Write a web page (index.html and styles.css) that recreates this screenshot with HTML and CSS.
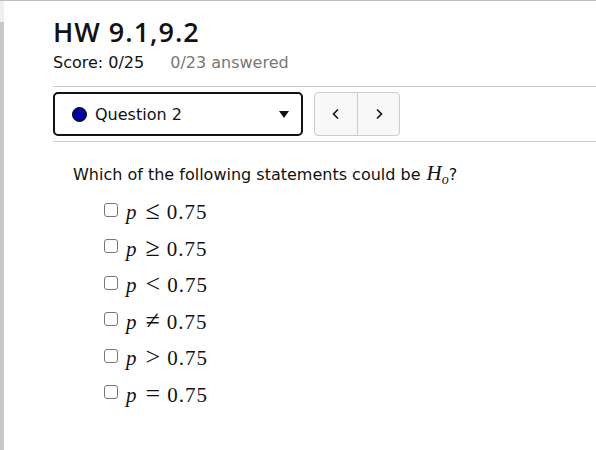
FILE: index.html
```html
<!DOCTYPE html>
<html>
<head>
<meta charset="utf-8">
<link rel="stylesheet" href="styles.css">
</head>
<body>
<div class="page">
  <div class="strip"><div class="strip-top"></div><div class="strip-bottom"></div></div>
  <main class="main">
    <h1 class="title">HW 9.1,9.2</h1>
    <div class="scoreline"><span class="score">Score: 0/25</span><span class="answered">0/23 answered</span></div>
    <div class="navbar">
      <div class="select">
        <span class="dot"></span>
        <span class="qlabel">Question 2</span>
        <span class="caret"></span>
      </div>
      <div class="navbtns">
        <button class="navbtn"><svg width="10" height="12" viewBox="0 0 10 12"><path d="M7 1.5 L2.5 6 L7 10.5" fill="none" stroke="#111" stroke-width="1.6"/></svg></button>
        <button class="navbtn"><svg width="10" height="12" viewBox="0 0 10 12"><path d="M3 1.5 L7.5 6 L3 10.5" fill="none" stroke="#111" stroke-width="1.6"/></svg></button>
      </div>
    </div>
    <div class="question">
      <p class="qtext">Which of the following statements could be <span class="hvar">H<sub class="sub">o</sub></span>?</p>
      <ul class="options">
        <li class="opt"><span class="cb"></span><span class="math"><span class="mi">p</span><span class="rel">≤</span>0.75</span></li>
        <li class="opt"><span class="cb"></span><span class="math"><span class="mi">p</span><span class="rel">≥</span>0.75</span></li>
        <li class="opt"><span class="cb"></span><span class="math"><span class="mi">p</span><span class="rel">&lt;</span>0.75</span></li>
        <li class="opt"><span class="cb"></span><span class="math"><span class="mi">p</span><span class="rel">≠</span>0.75</span></li>
        <li class="opt"><span class="cb"></span><span class="math"><span class="mi">p</span><span class="rel">&gt;</span>0.75</span></li>
        <li class="opt"><span class="cb"></span><span class="math"><span class="mi">p</span><span class="rel">=</span>0.75</span></li>
      </ul>
    </div>
  </main>
</div>
</body>
</html>
```
FILE: styles.css
```css
* { box-sizing: border-box; }
html, body { margin: 0; padding: 0; background: #fff; }
body { font-family: "DejaVu Sans", sans-serif; color: #111; }
.page { display: flex; min-height: 450px; border-top: 1px solid #bbb; }
.strip { width: 4px; display: flex; flex-direction: column; }
.strip-top { height: 21px; background: #efefef; }
.strip-bottom { flex: 1; background: #c8c8c8; }
.main { flex: 1; padding-left: 49px; }
.title { margin: 0; padding-top: 16px; font-family: "Open Sans", sans-serif; font-size: 27px; font-weight: 600; letter-spacing: 1px; line-height: 30px; }
.scoreline { display: flex; gap: 26px; font-size: 16px; margin-top: 6px; line-height: 20px; }
.answered { color: #777; }
.navbar { display: flex; align-items: center; gap: 11px; margin-top: 13px; border-top: 1px solid #ccc; border-bottom: 1px solid #ccc; padding: 5px 0; }
.select { width: 250px; height: 44px; border: 2px solid #111; border-radius: 5px; display: flex; align-items: center; padding: 0 12px 0 17px; }
.dot { width: 15px; height: 15px; border-radius: 50%; background: #00009b; border: 1px solid #000; }
.qlabel { margin-left: 8px; font-size: 16px; flex: 1; }
.caret { width: 0; height: 0; border-left: 5px solid transparent; border-right: 5px solid transparent; border-top: 7px solid #111; }
.navbtns { display: flex; height: 44px; border: 1px solid #ccc; border-radius: 4px; background: #f8f8f8; }
.navbtn { width: 42px; background: transparent; border: none; display: flex; align-items: center; justify-content: center; padding: 0; }
.navbtn + .navbtn { border-left: 1px solid #ccc; }
.question { padding-left: 20px; padding-top: 16px; }
.qtext { margin: 0; font-size: 16px; line-height: 30px; }
.hvar { font-family: "Liberation Serif", serif; font-style: italic; font-size: 21px; margin-left: 1px; }
.sub { font-size: 14px; vertical-align: -4px; line-height: 0; }
.options { list-style: none; margin: 4px 0 0; padding: 0 0 0 31px; }
.opt { display: flex; align-items: center; height: 36.5px; }
.cb { width: 14px; height: 14px; border: 1px solid #777; border-radius: 3px; margin-right: 8px; margin-top: -5px; }
.math { font-family: "Liberation Serif", serif; font-size: 21px; letter-spacing: 1px; line-height: 24px; }
.mi { font-style: italic; }
.rel { font-size: 26px; line-height: 0; margin: 0 7px 0 8px; letter-spacing: 0; }
```
